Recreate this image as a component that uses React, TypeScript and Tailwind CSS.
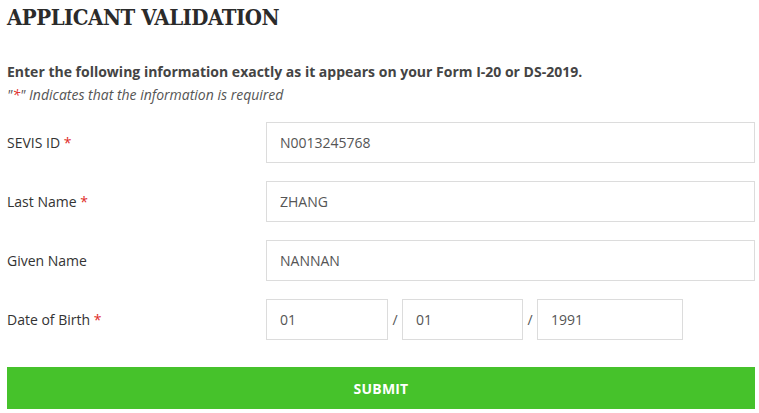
import { useState } from 'react'

const sans = { fontFamily: '"Open Sans", "Liberation Sans", sans-serif' }

function Field({ label, required, children }: { label: string; required?: boolean; children: React.ReactNode }) {
  return (
    <div className="flex items-center h-[41px] mb-[18px]">
      <label className="w-[259px] shrink-0 text-[14px] text-[#333]">
        {label}
        {required && <span className="text-[#e02b27]"> *</span>}
      </label>
      {children}
    </div>
  )
}

export default function App() {
  const [form, setForm] = useState({ sevis: 'N0013245768', last: 'ZHANG', given: 'NANNAN', mm: '01', dd: '01', yyyy: '1991' })
  const input = 'h-[41px] border border-[#dcdcdc] bg-white px-[13px] text-[14px] text-[#555] outline-none'

  return (
    <div className="bg-white min-h-[413px] pl-[7px] pr-[4px] pt-[1px]" style={sans}>
      <h1 className="text-[22px] leading-[32px] font-bold text-[#2b2b2b] tracking-[-0.5px]" style={{ fontFamily: '"DejaVu Serif Condensed", "DejaVu Serif", "Liberation Serif", serif' }}>
        APPLICANT VALIDATION
      </h1>

      <p className="mt-[29px] text-[14px] leading-[20px] font-bold text-[#444]">
        Enter the following information exactly as it appears on your Form I-20 or DS-2019.
      </p>
      <p className="mt-[3px] text-[14px] leading-[20px] italic text-[#555]">
        "<span className="text-[#e02b27]">*</span>" Indicates that the information is required
      </p>

      <div className="mt-[17px]">
        <Field label="SEVIS ID" required>
          <input className={`${input} flex-1`} value={form.sevis} onChange={(e) => setForm({ ...form, sevis: e.target.value })} />
        </Field>
        <Field label="Last Name" required>
          <input className={`${input} flex-1`} value={form.last} onChange={(e) => setForm({ ...form, last: e.target.value })} />
        </Field>
        <Field label="Given Name">
          <input className={`${input} flex-1`} value={form.given} onChange={(e) => setForm({ ...form, given: e.target.value })} />
        </Field>
        <Field label="Date of Birth" required>
          <div className="flex items-center">
            <input className={`${input} w-[122px]`} value={form.mm} onChange={(e) => setForm({ ...form, mm: e.target.value })} />
            <span className="w-[14px] text-center text-[14px] text-[#555]">/</span>
            <input className={`${input} w-[121px]`} value={form.dd} onChange={(e) => setForm({ ...form, dd: e.target.value })} />
            <span className="w-[14px] text-center text-[14px] text-[#555]">/</span>
            <input className={`${input} w-[146px]`} value={form.yyyy} onChange={(e) => setForm({ ...form, yyyy: e.target.value })} />
          </div>
        </Field>
      </div>

      <button className="mt-[9px] w-full h-[42px] bg-[#46c22b] text-white text-[14px] font-bold tracking-[0.2px]">
        SUBMIT
      </button>
    </div>
  )
}
